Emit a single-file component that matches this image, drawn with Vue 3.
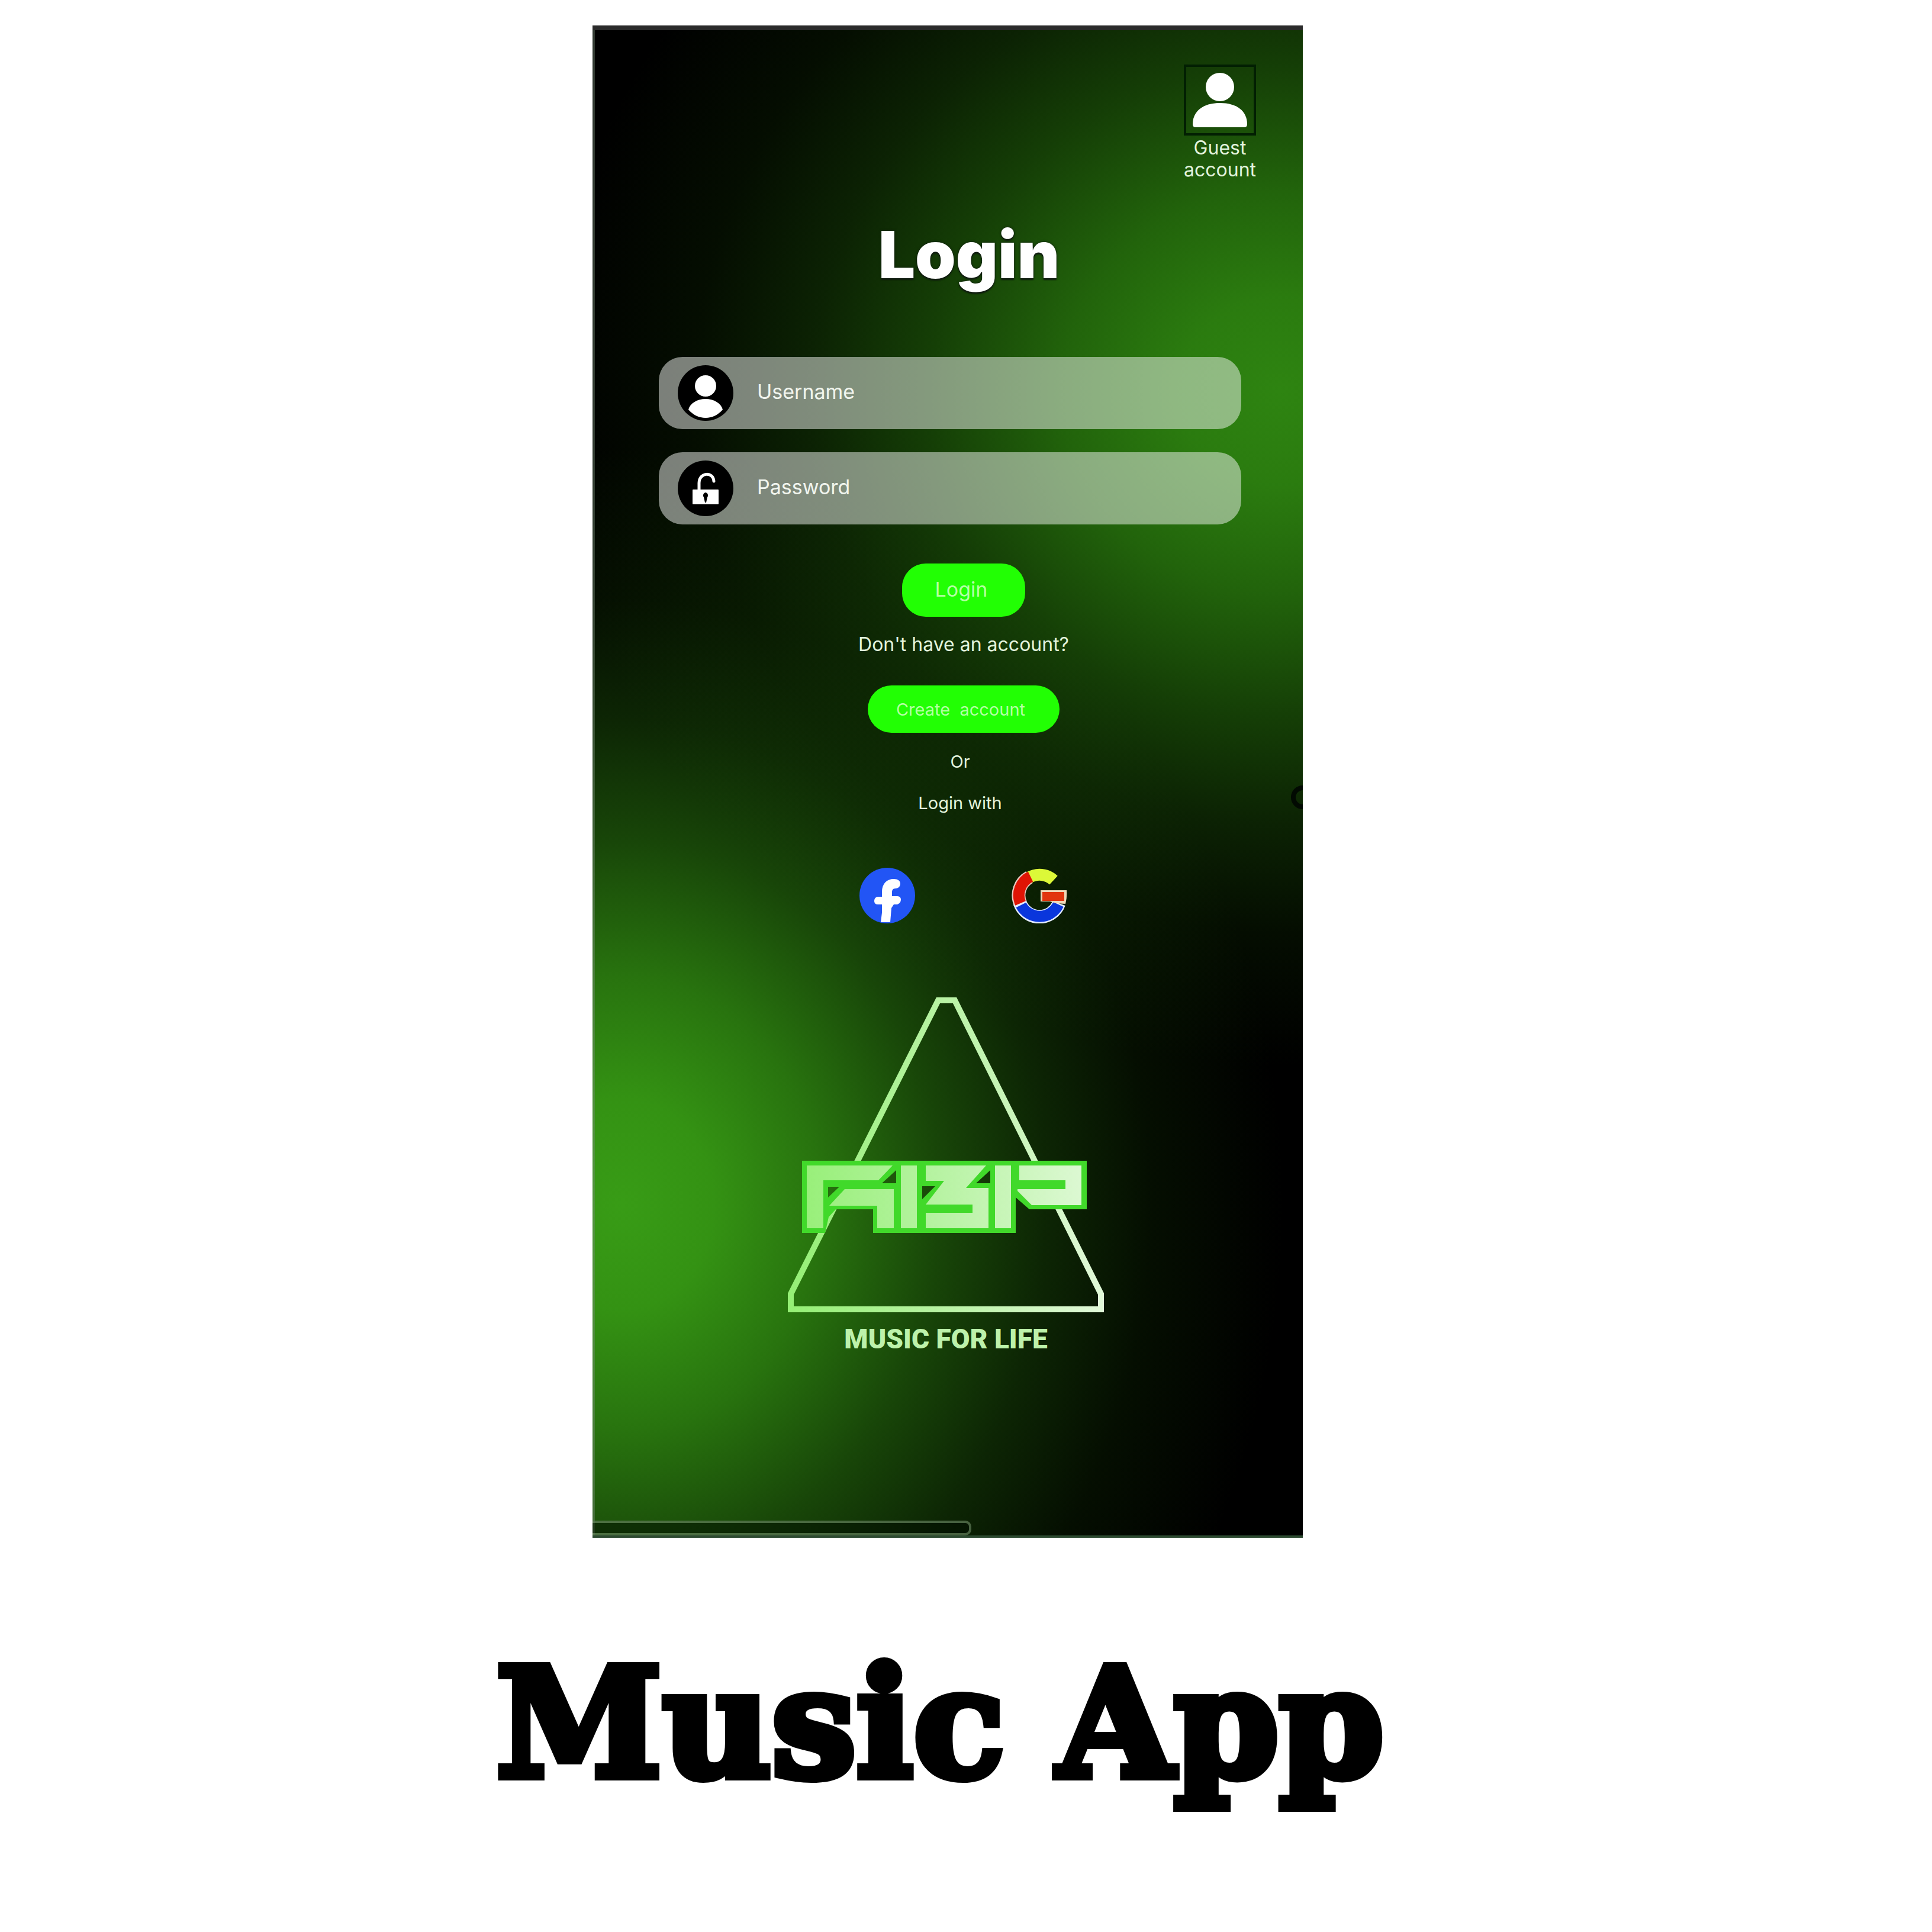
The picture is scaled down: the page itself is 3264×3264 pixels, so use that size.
<script setup>
import { ref } from 'vue'

const username = ref('')
const password = ref('')
</script>

<template>
  <main class="page">
    <section class="phone">
      <header class="top">
        <a class="guest" href="#guest">
          <span class="guest-frame">
            <svg viewBox="0 0 114 112" width="114" height="112" aria-hidden="true">
              <circle cx="57" cy="34" r="24" fill="#fff" />
              <path d="M11 97c0-23 18-36 46-36s46 13 46 36q0 5-5 5H16q-5 0-5-5z" fill="#fff" />
            </svg>
          </span>
          <span>Guest<br />account</span>
        </a>
      </header>

      <form class="form" @submit.prevent>
        <h1 class="heading">Login</h1>

        <div class="fields">
          <div class="field">
            <label for="username">
              <svg viewBox="0 0 94 94" width="94" height="94" role="img" aria-label="Username">
                <circle cx="47" cy="47" r="47" fill="#000" />
                <circle cx="47" cy="35" r="18" fill="#fff" />
                <path d="M18 75c3-11 15-18 29-18s26 7 29 18c-8 9-18 14-29 14s-21-5-29-14z" fill="#fff" />
              </svg>
            </label>
            <input id="username" v-model="username" type="text" placeholder="Username" />
          </div>
          <div class="field">
            <label for="password">
              <svg viewBox="0 0 94 94" width="94" height="94" role="img" aria-label="Password">
                <circle cx="47" cy="47" r="47" fill="#000" />
                <path d="M36 50V38c0-18 24-20 25-3" fill="none" stroke="#fff" stroke-width="5" stroke-linecap="round" />
                <rect x="25" y="49" width="44" height="25" rx="1" fill="#fff" />
                <path d="M47 54a5 5 0 0 1 3 8l-2 9h-2l-2-9a5 5 0 0 1 3-8z" fill="#000" />
              </svg>
            </label>
            <input id="password" v-model="password" type="password" placeholder="Password" />
          </div>
        </div>

        <div class="actions">
          <button class="btn login" type="submit">Login</button>
          <p class="ask">Don't have an account?</p>
          <button class="btn create" type="button">Create&nbsp; account</button>
          <p class="small or">Or</p>
          <p class="small with">Login with</p>
          <div class="social">
            <button class="icon-btn" type="button" aria-label="Facebook">
              <svg viewBox="0 0 94 94" width="94" height="94">
                <circle cx="47" cy="47" r="47" fill="#2255f5" />
                <path
                  d="M36 92L38 76V62h-7q-6 0-6-6t6-7h7V41c0-14 8-22 20-22 7 0 11 3 11 8s-4 8-8 8c-5 0-6 3-6 7v6h9q6 0 6 6t-6 8h-6l-4 6-2 24z"
                  fill="#fff"
                />
              </svg>
            </button>
            <button class="icon-btn" type="button" aria-label="Google">
              <svg viewBox="0 0 96 94" width="96" height="94" fill="none">
                <path d="M31 16A35 35 0 0 0 16 61" stroke="#e8c9c0" stroke-width="23" />
                <path d="M15 59A35 35 0 0 0 81 60" stroke="#e4ecff" stroke-width="23" />
                <path d="M30 17A35 35 0 0 1 72 21" stroke="#dcf838" stroke-width="20" />
                <path d="M33 15A35 35 0 0 0 16 60" stroke="#e01405" stroke-width="19" />
                <path d="M17 63A35 35 0 0 0 80 62" stroke="#0a36dc" stroke-width="19" />
                <path d="M50 38h44q1 12-2 23L76 60 66 57H50z" fill="#f0d8b8" />
                <path d="M53 41h37v15H53z" fill="#e2360f" />
              </svg>
            </button>
          </div>
        </div>
      </form>

      <div class="brand">
        <svg viewBox="0 0 540 544" width="540" height="544" role="img" aria-label="ABP">
          <defs>
            <linearGradient id="pale" gradientUnits="userSpaceOnUse" x1="0" y1="0" x2="540" y2="0">
              <stop offset="0" stop-color="#94ef74" />
              <stop offset="0.5" stop-color="#b9f3a5" />
              <stop offset="1" stop-color="#e2f9da" />
            </linearGradient>
          </defs>
          <path d="M257 10h28L532 506v26H8v-26z" fill="none" stroke="url(#pale)" stroke-width="10" />
          <path
            d="M27 281H508V363H411L388 343V403H147V363H84L72 376L66 403H27z
               M162 319H186V297z M71 325V343L90 325z M230 324V346L252 324z M321 319H345V297z"
            fill="#41d92a"
            fill-rule="evenodd"
          />
          <g fill="url(#pale)">
            <path d="M35 289H180L156 314H63V395H35z" />
            <path d="M73 357L99 329H182V395H154V357z" />
            <path d="M194 289H221V395H194z" />
            <path d="M236 289H338L304 327H342V395H236V369H315V355H236L267 315H236z" />
            <path d="M353 289H380V395H353z" />
            <path d="M394 289H499V356H415L391 332V329H472V314H394z" />
          </g>
        </svg>
        <p class="slogan">MUSIC FOR LIFE</p>
      </div>

      <span class="edge-ring"></span>
      <span class="scroll-track"></span>
    </section>

    <h2 class="title">Music App</h2>
  </main>
</template>

<style>
body {
  margin: 0;
  background: #fff;
}
</style>

<style scoped>
.page {
  display: flex;
  flex-direction: column;
  align-items: center;
  padding: 43px 62px 100px 0;
  font-family: Inter, 'Liberation Sans', sans-serif;
}

p,
h1,
h2 {
  margin: 0;
}

.phone {
  position: relative;
  overflow: hidden;
  box-sizing: border-box;
  width: 100%;
  max-width: 1200px;
  padding-bottom: 308px;
  border-top: 8px solid #2b2b2b;
  border-bottom: 4px solid #2c4a30;
  color: #e3f3dc;
  background:
    linear-gradient(90deg, rgba(120, 140, 120, 0.4) 4px, transparent 4px),
    radial-gradient(
      1240px 1140px at 97% 24%,
      rgba(46, 132, 17, 1) 0%,
      rgba(45, 130, 16, 0.95) 14%,
      rgba(42, 124, 14, 0.8) 30%,
      rgba(40, 120, 12, 0.52) 48%,
      rgba(40, 118, 12, 0.29) 64%,
      rgba(36, 110, 8, 0.12) 80%,
      rgba(30, 100, 4, 0) 100%
    ),
    radial-gradient(
      1120px 1280px at 4% 78%,
      rgba(56, 156, 22, 1) 0%,
      rgba(54, 152, 20, 0.96) 14%,
      rgba(50, 144, 18, 0.8) 30%,
      rgba(46, 134, 16, 0.52) 48%,
      rgba(42, 124, 14, 0.3) 64%,
      rgba(36, 110, 8, 0.13) 80%,
      rgba(30, 100, 4, 0) 100%
    ),
    #000;
}

.top {
  display: flex;
  justify-content: flex-end;
  padding: 58px 79px 0 0;
}

.guest {
  display: flex;
  flex-direction: column;
  align-items: center;
  gap: 2px;
  color: inherit;
  font-size: 32px;
  line-height: 37px;
  text-align: center;
  text-decoration: none;
}

.guest-frame {
  display: flex;
  border: 4px solid #021f02;
}

.form {
  display: flex;
  flex-direction: column;
}

.heading {
  margin-top: 65px;
  padding-left: 72px;
  color: #fff;
  font-size: 110px;
  font-weight: 900;
  line-height: 120px;
  text-align: center;
  text-shadow: 0 3px 2px #101c10, 0 0 4px #101c10;
}

.fields {
  display: flex;
  flex-direction: column;
  gap: 39px;
  margin-top: 113px;
  padding: 0 104px 0 112px;
}

.field {
  display: flex;
  align-items: center;
  gap: 40px;
  height: 122px;
  padding: 0 32px;
  border-radius: 40px;
  background: rgba(244, 246, 244, 0.5);
}

.field label {
  display: flex;
}

.field input {
  flex: 1;
  min-width: 0;
  padding: 0 0 4px;
  border: 0;
  outline: 0;
  background: none;
  color: #f1f5ee;
  font: 34px/48px Inter, 'Liberation Sans', sans-serif;
}

.field input::placeholder {
  color: #f1f5ee;
  opacity: 1;
}

.actions {
  display: flex;
  flex-direction: column;
  align-items: center;
  margin-top: 66px;
  padding-left: 54px;
}

.btn {
  border: 0;
  border-radius: 40px;
  background: #22ff04;
  color: #b4ffa4;
  font-family: inherit;
}

.login {
  width: 208px;
  height: 90px;
  padding: 0 8px 4px 0;
  font-size: 34px;
}

.create {
  width: 324px;
  height: 80px;
  margin-top: 51px;
  padding: 0 10px 0 0;
  font-size: 29px;
}

.ask {
  margin-top: 29px;
  font-size: 32px;
  line-height: 36px;
}

.small {
  padding-right: 12px;
  font-size: 29px;
  line-height: 34px;
}

.or {
  margin-top: 32px;
}

.with {
  margin-top: 36px;
}

.social {
  display: flex;
  gap: 162px;
  margin-top: 92px;
}

.icon-btn {
  display: flex;
  padding: 0;
  border: 0;
  border-radius: 50%;
  background: none;
}

.brand {
  display: flex;
  flex-direction: column;
  align-items: center;
  margin-top: 120px;
  padding-right: 6px;
}

.slogan {
  margin-top: 14px;
  color: #bdf2ab;
  font-family: Roboto, 'Liberation Sans', sans-serif;
  font-size: 46px;
  font-weight: 900;
  line-height: 48px;
}

.edge-ring {
  position: absolute;
  top: 1276px;
  right: -20px;
  width: 24px;
  height: 24px;
  border: 8px solid #020a02;
  border-radius: 50%;
}

.scroll-track {
  position: absolute;
  bottom: 0;
  left: -8px;
  box-sizing: border-box;
  width: 54%;
  height: 25px;
  border: 4px solid rgba(150, 190, 140, 0.45);
  border-radius: 10px;
  background: rgba(0, 10, 0, 0.5);
}

.title {
  margin-top: 184px;
  padding-right: 26px;
  color: #000;
  font-family: 'DejaVu Serif', serif;
  font-size: 254px;
  font-weight: 700;
  line-height: 260px;
  text-align: center;
  -webkit-text-stroke: 14px #000;
}
</style>
